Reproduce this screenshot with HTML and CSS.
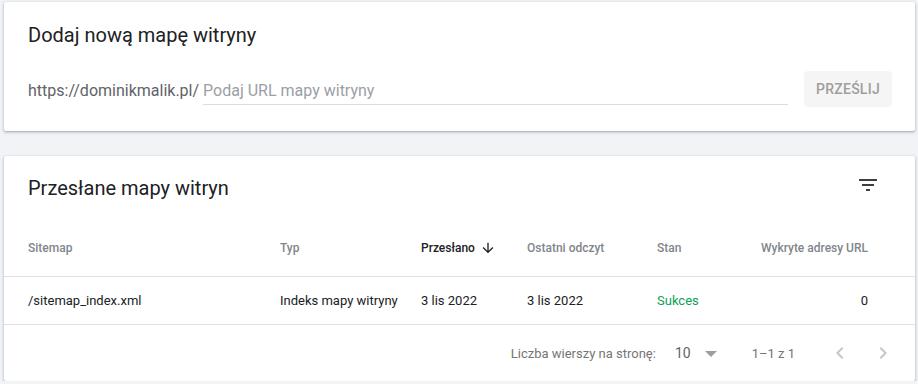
FILE: index.html
```html
<!DOCTYPE html>
<html lang="pl">
<head>
<meta charset="utf-8">
<link rel="stylesheet" href="styles.css">
</head>
<body>
<section class="card add-card">
  <h2 class="card-title">Dodaj nową mapę witryny</h2>
  <div class="add-row">
    <span class="prefix">https://dominikmalik.pl/</span>
    <label class="field"><input type="text" placeholder="Podaj URL mapy witryny"></label>
    <button class="submit" type="button">Prześlij</button>
  </div>
</section>

<section class="card list-card">
  <div class="list-head">
    <h2 class="card-title">Przesłane mapy witryn</h2>
    <svg class="filter" viewBox="0 0 24 24" width="24" height="24"><path d="M10 18h4v-2h-4v2zM3 6v2h18V6H3zm3 7h12v-2H6v2z"/></svg>
  </div>
  <div class="grid head-row">
    <div>Sitemap</div>
    <div>Typ</div>
    <div class="sorted">Przesłano <svg class="arrow" viewBox="0 0 24 24" width="16" height="16"><path d="M20 12l-1.41-1.41L13 16.17V4h-2v12.17l-5.58-5.59L4 12l8 8 8-8z"/></svg></div>
    <div>Ostatni odczyt</div>
    <div>Stan</div>
    <div class="num">Wykryte adresy URL</div>
  </div>
  <div class="grid data-row">
    <div>/sitemap_index.xml</div>
    <div>Indeks mapy witryny</div>
    <div>3 lis 2022</div>
    <div>3 lis 2022</div>
    <div class="ok">Sukces</div>
    <div class="num">0</div>
  </div>
  <div class="pager">
    <span class="pager-label">Liczba wierszy na stronę:</span>
    <span class="rows">10</span>
    <span class="caret"></span>
    <span class="range">1–1 z 1</span>
    <svg class="chev" viewBox="0 0 24 24" width="24" height="24"><path d="M15.41 7.41L14 6l-6 6 6 6 1.41-1.41L10.83 12z"/></svg>
    <svg class="chev" viewBox="0 0 24 24" width="24" height="24"><path d="M10 6L8.59 7.41 13.17 12l-4.58 4.59L10 18l6-6z"/></svg>
  </div>
</section>
</body>
</html>
```

FILE: styles.css
```css
* { box-sizing: border-box; }
html, body { margin: 0; }
body {
  background: #f1f3f7;
  padding: 2px 3px 0 4px;
  font-family: Roboto, "Liberation Sans", sans-serif;
  color: #202124;
}
.card {
  background: #fff;
  border-radius: 2px;
  box-shadow: 0 1px 2px rgba(60,64,67,.3), 0 1px 3px 1px rgba(60,64,67,.12);
}
.card-title {
  margin: 0;
  font-size: 20px;
  font-weight: 400;
  line-height: 28px;
  color: #202124;
}
.add-card {
  height: 129px;
  padding: 19px 24px 0 24px;
}
.add-row {
  display: flex;
  align-items: center;
  margin-top: 22px;
  height: 36px;
}
.prefix {
  font-size: 16px;
  color: #5f6368;
  margin-right: 4px;
  padding-top: 2px;
}
.field {
  flex: 1;
  display: block;
  margin-right: 16px;
  border-bottom: 1px solid #dadce0;
  height: 29px;
  margin-top: 3px;
}
.field input {
  display: block;
  border: 0;
  outline: 0;
  padding: 0;
  width: 100%;
  height: 20px;
  line-height: 20px;
  font: 400 16px Roboto, "Liberation Sans", sans-serif;
  color: #202124;
  background: transparent;
  margin-top: 4px;
}
.field input::placeholder { color: #9aa0a6; }
.submit {
  width: 88px;
  height: 36px;
  border: 0;
  border-radius: 4px;
  background: #f5f5f5;
  color: #9e9e9e;
  font: 500 14px Roboto, "Liberation Sans", sans-serif;
  letter-spacing: .25px;
  text-transform: uppercase;
  margin-right: -1px;
}
.list-card {
  margin-top: 25px;
  height: 225px;
}
.list-head {
  display: flex;
  align-items: center;
  justify-content: space-between;
  height: 64px;
  padding: 0 35px 0 24px;
}
.filter { fill: #3c4043; margin-top: -6px; }
.grid {
  display: grid;
  grid-template-columns: 252px 141px 106px 130px 1fr auto;
  align-items: center;
  padding: 0 47px 0 24px;
  border-bottom: 1px solid #e0e0e0;
}
.head-row {
  height: 57px;
  font-size: 12px;
  font-weight: 500;
  color: #80868b;
}
.head-row .sorted {
  color: #202124;
  display: flex;
  align-items: center;
}
.arrow { fill: #202124; margin-left: 5px; }
.data-row {
  height: 48px;
  font-size: 13px;
  color: #202124;
}
.num { text-align: right; }
.ok { color: #0f9d58; }
.pager {
  display: flex;
  align-items: center;
  justify-content: flex-end;
  height: 56px;
  padding-right: 20px;
  font-size: 13px;
  color: #757575;
}
.rows { margin-left: 19px; color: #5f6368; font-size: 14px; }
.caret {
  width: 0; height: 0;
  border-left: 6px solid transparent;
  border-right: 6px solid transparent;
  border-top: 6px solid #9e9e9e;
  margin-left: 14px;
  margin-top: 1px;
}
.range { margin-left: 35px; color: #757575; }
.chev { fill: #c4c7c9; }
.chev:first-of-type { margin-left: 33px; }
.chev + .chev { margin-left: 19px; }
```
